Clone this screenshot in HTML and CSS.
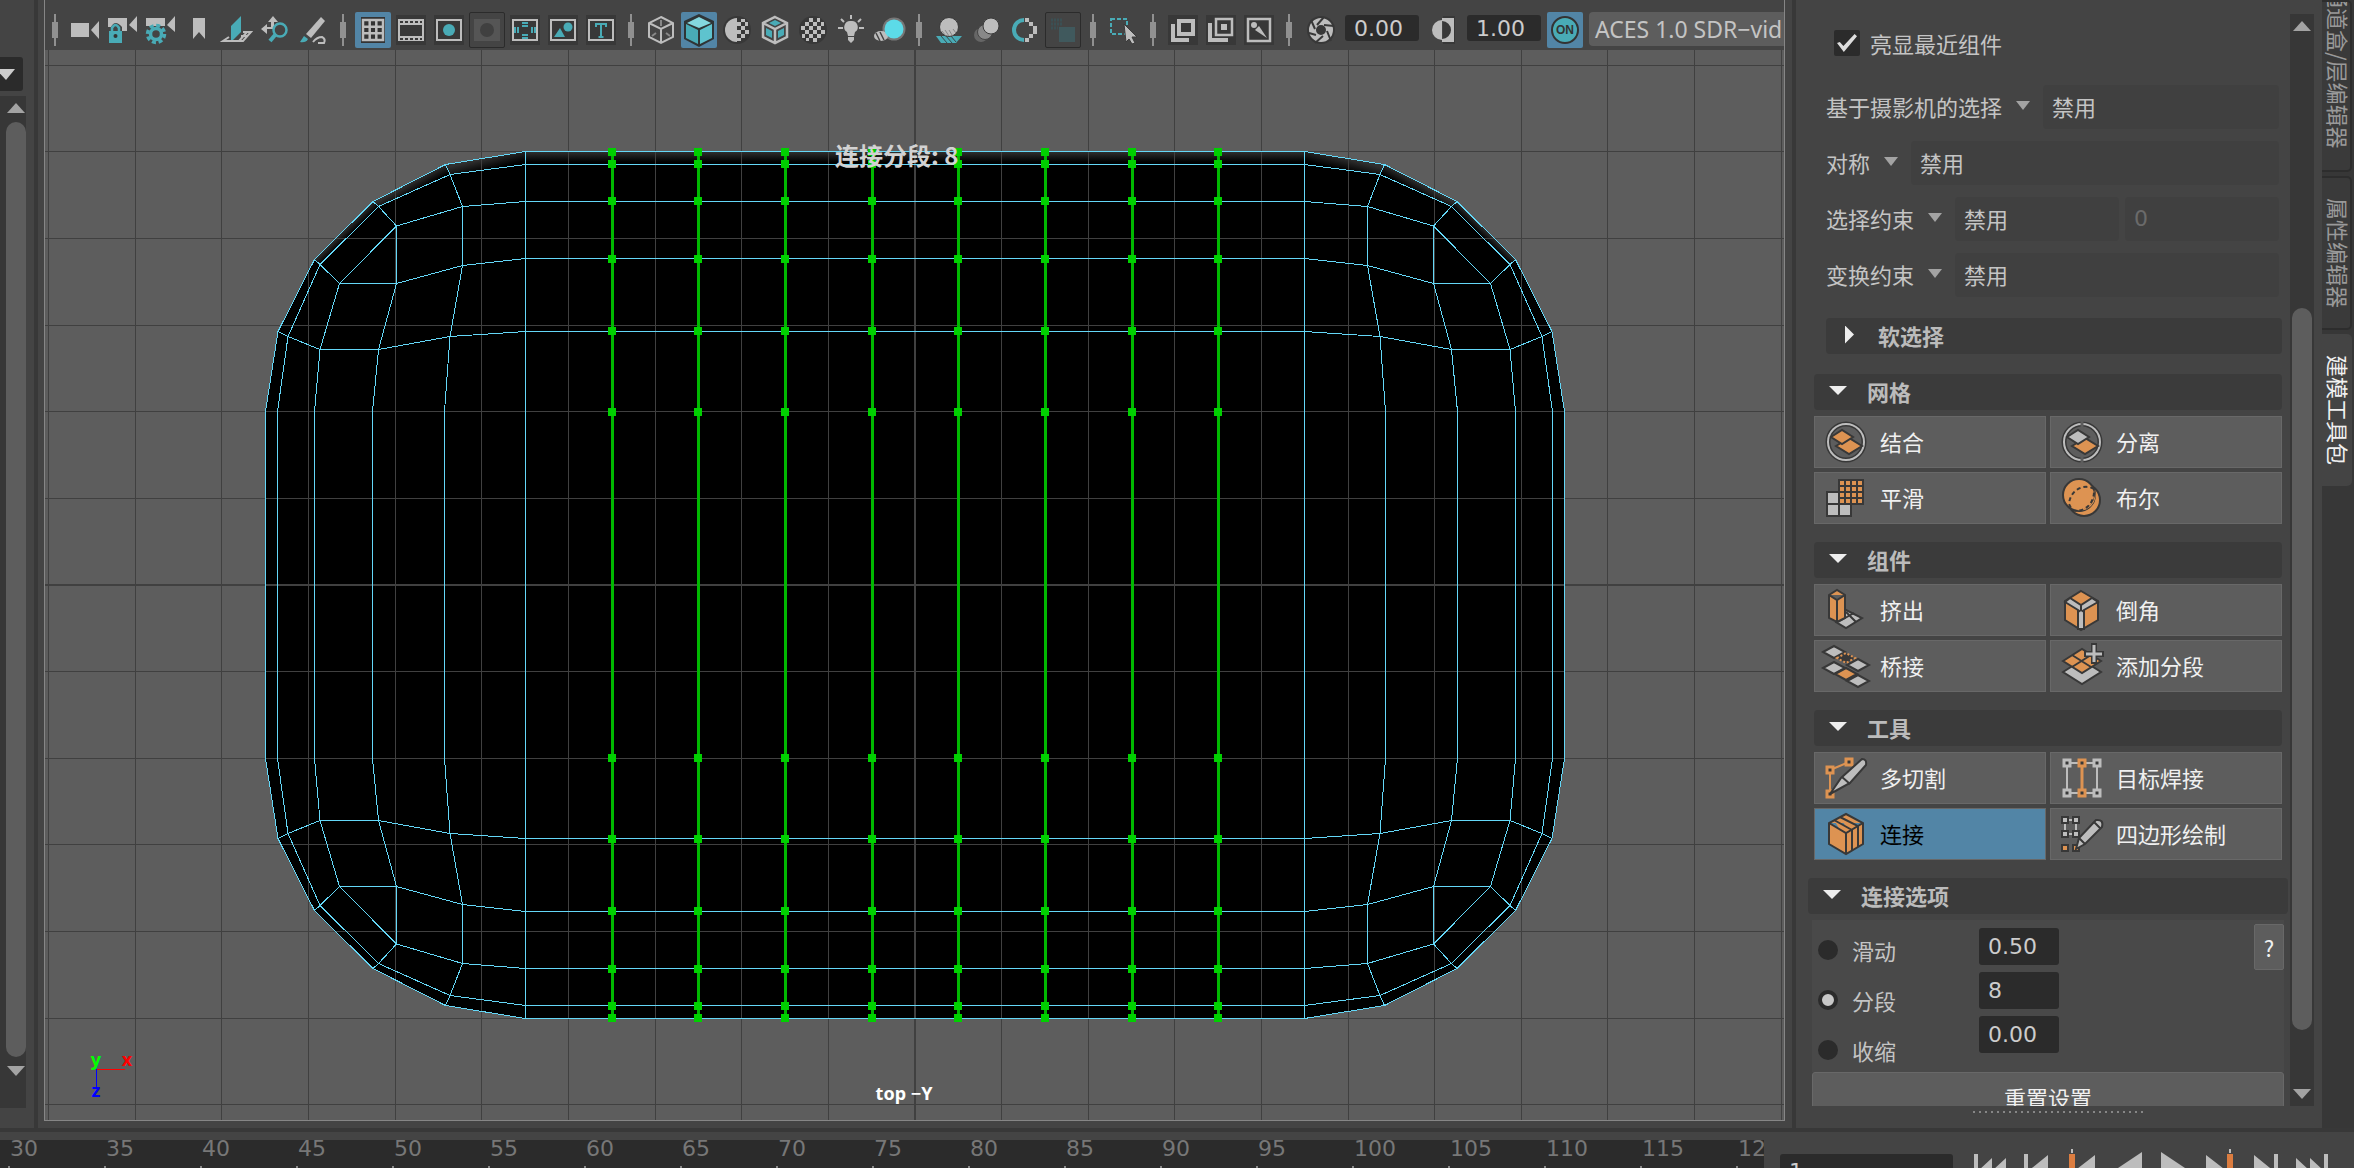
FILE: index.html
```html
<!DOCTYPE html>
<html lang="zh-CN">
<head>
<meta charset="utf-8">
<title>建模工具包</title>
<link rel="stylesheet" href="styles.css">
</head>
<body>
<div class="workspace">
  <aside class="left-strip">
    <button class="left-menu" aria-label="菜单"><svg width="16" height="12" viewBox="0 0 16 12"><path d="M-4 1H15L6 12Z" fill="#ccc"/></svg></button>
    <div class="scroll left-scroll">
      <svg class="arrow" width="18" height="10" viewBox="0 0 18 10"><path d="M0 10L9 0L18 10Z"/></svg>
      <div class="thumb left-thumb"></div>
      <svg class="arrow" width="18" height="10" viewBox="0 0 18 10"><path d="M0 0H18L9 10Z"/></svg>
    </div>
  </aside>

  <main class="view-cell">
    <div class="view-frame">
      <div class="toolbar">
        <svg class="sep" viewBox="0 0 20 36"><use href="#sep"/></svg>
        <button class="tool" aria-label="选择摄影机"><svg viewBox="0 0 36 36"><path class="g" d="M4 11H22V25H4ZM24 18L32 9V27Z"/></svg></button>
        <button class="tool" aria-label="锁定摄影机"><svg viewBox="0 0 36 36"><path class="g" d="M3 6H22V19H17V15Q10 7 6 15H3ZM24 13L32 4V20Z"/><path class="ts" stroke-width="2.500" d="M7 20V16Q10.500 10 14 16V20"/><path class="t" d="M4 19H17V31H4Z"/><circle cx="10.500" cy="24" r="2" fill="#333"/></svg></button>
        <button class="tool" aria-label="摄影机属性"><svg viewBox="0 0 36 36"><path class="g" d="M3 6H22V14H3ZM24 13L32 4V20Z"/><circle cx="13" cy="22" r="8.500" fill="none" stroke="#49abb6" stroke-width="3.500" stroke-dasharray="4 2.670"/><circle cx="13" cy="22" r="5.500" fill="#444" stroke="#49abb6" stroke-width="3.500"/></svg></button>
        <button class="tool" aria-label="书签"><svg viewBox="0 0 36 36"><path class="g" d="M12 6H24V27L18 20L12 27Z"/></svg></button>
        <button class="tool" aria-label="图像平面"><svg viewBox="0 0 36 36"><path class="t" d="M12 14L22 4V20L12 30Z"/><path fill="none" stroke="#bdbdbd" stroke-width="2" d="M10 25L4 29H24L32 20H24M22 24H29M28 20L20 29"/></svg></button>
        <button class="tool" aria-label="平移缩放"><svg viewBox="0 0 36 36"><path class="g" d="M16 4L21 10H17V17H10V22L4 17L10 12V15H14V10H11Z"/><circle class="ts" cx="23" cy="18" r="6.500" stroke-width="2.500"/><path class="ts" stroke-width="4" d="M18 23L13 29"/></svg></button>
        <button class="tool" aria-label="蓝色铅笔"><svg viewBox="0 0 36 36"><path class="g" d="M26 5L30 9L16 26L11 22Z"/><path class="t" d="M9 24L13 27Q11 31 5 30Z"/><path class="gs" stroke-width="2" d="M18 30Q22 25 27 25Q31 27 29 31H23"/></svg></button>
        <svg class="sep" viewBox="0 0 20 36"><use href="#sep"/></svg>
        <button class="tool on" aria-label="栅格"><svg viewBox="0 0 36 36"><path fill="#333" d="M6 5H30V31H6Z"/><path class="gs" stroke-width="2.500" d="M8 8H28V28H8ZM14.700 8V28M21.300 8V28M8 14.700H28M8 21.300H28"/></svg></button>
        <button class="tool" aria-label="胶片门"><svg viewBox="0 0 36 36"><use href="#plate"/><path class="g" d="M5 7H31V29H5Z"/><path fill="#383838" d="M5 13H31V24H5Z"/><path stroke="#383838" stroke-width="2" stroke-dasharray="3 2" d="M7 10H30M7 27H30"/><path class="gs" stroke-width="2" d="M6 7V29M30 7V29"/></svg></button>
        <button class="tool" aria-label="分辨率门"><svg viewBox="0 0 36 36"><use href="#plate"/><path class="gs" stroke-width="2" d="M6 8H30V28H6Z"/><circle class="t" cx="18" cy="18" r="6"/></svg></button>
        <button class="tool off" aria-label="门遮罩" disabled><svg viewBox="0 0 36 36"><path fill="#555" d="M5 7H31V29H5Z"/><circle fill="#404040" cx="18" cy="18" r="7"/></svg></button>
        <button class="tool" aria-label="区域图"><svg viewBox="0 0 36 36"><use href="#plate"/><path class="gs" stroke-width="2" d="M6 8H30V28H6Z"/><path class="ts" stroke-width="2" d="M15 11H21M15 14H21M15 23H21M15 26H21M8 15V21M11 15V21M25 15V21M28 15V21"/></svg></button>
        <button class="tool" aria-label="安全动作"><svg viewBox="0 0 36 36"><use href="#plate"/><path class="gs" stroke-width="2" d="M6 8H30V28H6Z"/><path class="t" d="M9 25L15 16L20 25Z"/><circle class="t" cx="23" cy="15" r="4.500"/></svg></button>
        <button class="tool" aria-label="安全标题"><svg viewBox="0 0 36 36"><use href="#plate"/><path class="gs" stroke-width="2" d="M6 8H30V28H6Z"/><path class="ts" stroke-width="2" d="M13 15V12H23V15M18 12V25M15.500 25H20.500"/></svg></button>
        <svg class="sep" viewBox="0 0 20 36"><use href="#sep"/></svg>
        <button class="tool" aria-label="线框"><svg viewBox="0 0 36 36"><path class="gs" stroke-width="2" d="M18 5L30 11V25L18 31L6 25V11ZM6 11L18 17L30 11M18 17V31"/><path stroke="#888" stroke-width="2" d="M18 8V14M9 24L13 21M27 24L23 21"/></svg></button>
        <button class="tool on" aria-label="着色"><svg viewBox="0 0 36 36"><path fill="#2f3436" d="M18 2L33 9V27L18 35L3 27V9Z"/><path fill="#84d7df" d="M18 5L30 11L18 16L6 11Z"/><path fill="#49abb6" d="M5 12L17 18V32L5 26Z"/><path fill="#5ec3ce" d="M31 12L19 18V32L31 26Z"/></svg></button>
        <button class="tool" aria-label="默认材质"><svg viewBox="0 0 36 36"><circle cx="18" cy="18" r="14" fill="#383838"/><path class="g" d="M18 6A12 12 0 0 0 18 30Z"/><path class="g" d="M18 10h4v4h-4zM18 18h4v4h-4zM18 26h4v3h-4zM22 7h4v3h-4zM22 14h4v4h-4zM22 22h4v4h-4zM26 10h3v4h-3zM26 18h4v4h-4z"/></svg></button>
        <button class="tool" aria-label="着色线框"><svg viewBox="0 0 36 36"><path class="gs" stroke-width="2.500" d="M18 5L30 11V25L18 31L6 25V11ZM6 11L18 17L30 11M18 17V31"/><path class="t" d="M18 8L24 11L18 14L12 11ZM9 16L15 19V26L9 23ZM27 16L21 19V26L27 23Z"/></svg></button>
        <button class="tool" aria-label="纹理"><svg viewBox="0 0 36 36"><circle cx="18" cy="18" r="14" fill="#383838"/><path class="g" d="M14 6h4v4h-4zM22 6h3v4h-3zM10 10h4v4h-4zM18 10h4v4h-4zM26 10h3v4h-3zM6 14h4v4h-4zM14 14h4v4h-4zM22 14h4v4h-4zM10 18h4v4h-4zM18 18h4v4h-4zM26 18h4v4h-4zM7 22h3v4h-3zM14 22h4v4h-4zM22 22h4v4h-4zM11 26h3v3h-3zM18 26h4v4h-4z"/></svg></button>
        <button class="tool" aria-label="灯光"><svg viewBox="0 0 36 36"><path class="g" d="M18 9A6 6 0 0 1 22 20L21 24H15L14 20A6 6 0 0 1 18 9ZM15 25H21V28L18 31L15 28Z"/><path class="gs" stroke-width="2" d="M18 3V7M8 7L11 10M28 7L25 10M5 16H10M26 16H31"/></svg></button>
        <button class="tool" aria-label="阴影"><svg viewBox="0 0 36 36"><circle cx="23" cy="17" r="11.500" fill="#777"/><ellipse cx="10" cy="24" rx="7" ry="5" fill="#bdbdbd"/><path stroke="#444" stroke-width="1.500" d="M5 21L9 29M9 20L13 28"/><circle cx="23" cy="17" r="9.500" fill="#5cdbe8"/></svg></button>
        <svg class="sep" viewBox="0 0 20 36"><use href="#sep"/></svg>
        <button class="tool" aria-label="环境光遮挡"><svg viewBox="0 0 36 36"><path class="t" d="M5 24H31L25 31H10Z"/><path stroke="#3a4a4c" d="M10 24L16 31M15 24L21 31M20 24L25 30"/><circle class="g" cx="18" cy="15" r="9.500" stroke="#3a3a3a"/><path stroke="#888" d="M11 19L14 23M14 18L18 24M18 18L21 23M22 17L25 21"/></svg></button>
        <button class="tool" aria-label="运动模糊"><svg viewBox="0 0 36 36"><circle cx="12" cy="23" r="7" fill="#666"/><circle cx="16" cy="20" r="7.500" fill="#888" stroke="#444"/><circle cx="22" cy="14" r="8" class="g" stroke="#3a3a3a"/></svg></button>
        <button class="tool" aria-label="抗锯齿"><svg viewBox="0 0 36 36"><path class="ts" stroke-width="4" d="M17 8A10 10 0 0 0 17 28"/><path class="g" d="M18 6h4v4h-4zM22 10h4v4h-4zM26 14h4v8h-4zM22 22h4v4h-4zM18 26h4v4h-4z"/></svg></button>
        <button class="tool off" aria-label="景深" disabled><svg viewBox="0 0 36 36"><path fill="#40595d" d="M14 15H30V30H14Z"/><path stroke="#3b5054" stroke-width="3" stroke-dasharray="2 1" d="M6 8H18M6 12H18M6 16H13"/></svg></button>
        <svg class="sep" viewBox="0 0 20 36"><use href="#sep"/></svg>
        <button class="tool" aria-label="隔离选择"><svg viewBox="0 0 36 36"><path class="ts" stroke-width="2" stroke-dasharray="4 2" d="M6 7H22V22H6Z"/><path class="g" d="M19 12L32 25L27 25L30 31L27 32L24 27L21 30Z" stroke="#3a3a3a"/></svg></button>
        <svg class="sep" viewBox="0 0 20 36"><use href="#sep"/></svg>
        <button class="tool" aria-label="X 射线"><svg viewBox="0 0 36 36"><use href="#plate"/><path class="gs" stroke-width="4" d="M14 9H28V22H14ZM10 14H8V28H22V26"/></svg></button>
        <button class="tool" aria-label="X 射线显示活动组件"><svg viewBox="0 0 36 36"><use href="#plate"/><path class="gs" stroke-width="2.500" d="M13 7H29V23H13Z"/><path class="gs" stroke-width="4" d="M9 13H7V28H23V26"/><path class="g" d="M18 12H24V18H18Z"/></svg></button>
        <button class="tool" aria-label="X 射线显示关节"><svg viewBox="0 0 36 36"><use href="#plate"/><path class="gs" stroke-width="2.500" d="M7 7H29V29H7Z"/><circle class="g" cx="13" cy="13" r="3"/><path class="g" d="M14 18L18 14L26 26Z"/></svg></button>
        <svg class="sep" viewBox="0 0 20 36"><use href="#sep"/></svg>
        <div class="exposure">
          <button class="tool" aria-label="曝光"><svg viewBox="0 0 36 36"><circle cx="18" cy="18" r="14" fill="#383838"/><circle class="gs" cx="18" cy="18" r="8.500" stroke-width="7"/><path stroke="#383838" stroke-width="2" d="M14 13L21 5M21 13L31 14M24 19L28 29M20 24L12 31M13 23L6 21M12 17L8 8"/></svg></button>
          <input class="num" type="text" value="0.00" aria-label="曝光值">
          <button class="tool" aria-label="Gamma"><svg viewBox="0 0 36 36"><path fill="#383838" d="M18 4H30V32H18Z"/><path class="g" d="M17 8A10 10 0 0 0 17 28Z"/><path class="g" d="M17 6H29V30H17V27A9 9 0 0 0 17 9Z"/></svg></button>
          <input class="num" type="text" value="1.00" aria-label="Gamma 值">
          <button class="tool on on-badge" aria-label="颜色管理"><svg viewBox="0 0 36 36"><circle cx="18" cy="18" r="13" fill="#49abb6" stroke="#333" stroke-width="2"/><text x="18" y="22" text-anchor="middle">ON</text></svg></button>
          <button class="color-space">ACES 1.0 SDR−vid</button>
        </div>
      </div>

      <svg class="viewport" viewBox="45 50 1739 1070" preserveAspectRatio="xMidYMid slice">
        <defs>
          <g id="sep"><path fill="#909090" d="M9 2H11V34H9ZM7 10H13V26H7Z"/></g>
          <path id="plate" fill="#383838" d="M3 3H33V33H3Z"/>
          <linearGradient id="rimTop" x1="0" y1="0" x2="0" y2="1"><stop offset="0" stop-color="#303030"/><stop offset=".8" stop-color="#000"/></linearGradient>
          <linearGradient id="rimA" gradientUnits="userSpaceOnUse" x1="-430" y1="-427" x2="-427" y2="-415"><stop offset="0" stop-color="#303030"/><stop offset="1" stop-color="#000"/></linearGradient>
          <linearGradient id="rimB" gradientUnits="userSpaceOnUse" x1="-505" y1="-402" x2="-500" y2="-393"><stop offset="0" stop-color="#303030"/><stop offset="1" stop-color="#000"/></linearGradient>
          <linearGradient id="rimC" gradientUnits="userSpaceOnUse" x1="-571" y1="-354" x2="-566" y2="-349"><stop offset="0" stop-color="#2a2a2a"/><stop offset="1" stop-color="#000"/></linearGradient>
          <path id="body" d="M0-433.500H-389.500L-469.500-420.500L-542-383.500L-600.500-325.500L-637-253.500L-649.500-173.500V0H0Z"/>
          <g id="rim">
            <path fill="url(#rimTop)" d="M0-433.500H-389.500V-420.500H0Z"/>
            <path fill="url(#rimA)" d="M-389.500-433.500L-469.500-420.500L-465-410.500L-389.500-420.500Z"/>
            <path fill="url(#rimB)" d="M-469.500-420.500L-542-383.500L-536.500-378.500L-465-410.500Z"/>
            <path fill="url(#rimC)" d="M-542-383.500L-600.500-325.500L-595-320.500L-536.500-378.500Z"/>
          </g>
          <path id="wires" d="M0-433.500H-389.500L-469.500-420.500L-542-383.500L-600.500-325.500L-637-253.500L-649.500-173.500V0
            M0-420.500H-389.500L-465-410.500L-536.500-378.500L-595-320.500L-627-248.500L-637.500-173.500V0
            M0-383.500H-389.500L-452.500-378.500L-518.500-359L-575.500-301.500L-595-235.500L-600.500-173.500V0
            M0-326.500H-389.500L-452.500-319.500L-518.500-301.500H-575.500
            M0-253.500H-389.500L-465-248.500L-536.500-235.500H-595L-627-248.500L-637-253.500
            M-389.500-433.500V0
            M-469.500-420.500L-465-410.500L-452.500-378.500V-319.500L-465-248.500L-470.500-173.500V0
            M-542-383.500L-536.500-378.500L-518.500-359V-301.500L-536.500-235.500L-542.500-173.500V0
            M-600.500-325.500L-595-320.500L-575.500-301.500"/>
          <g id="cut">
            <path fill="#00b800" d="M-1-433H2V433H-1Z"/>
            <path fill="#00d000" d="M-4-437h8v8h-8zM-4-425h8v8h-8zM-4-388h8v8h-8zM-4-330h8v8h-8zM-4-258h8v8h-8zM-4-177h8v8h-8zM-4 169h8v8h-8zM-4 250h8v8h-8zM-4 322h8v8h-8zM-4 380h8v8h-8zM-4 417h8v8h-8zM-4 429h8v8h-8z"/>
          </g>
        </defs>
        <g transform="translate(915 585)">
          <use href="#body"/><use href="#body" transform="scale(-1 1)"/><use href="#body" transform="scale(1 -1)"/><use href="#body" transform="scale(-1 -1)"/>
          <use href="#rim"/><use href="#rim" transform="scale(-1 1)"/>
        </g>
        <path class="grid" d="M48.500 50V1120M135.500 50V1120M221.500 50V1120M308.500 50V1120M395.500 50V1120M481.500 50V1120M568.500 50V1120M655.500 50V1120M741.500 50V1120M828.500 50V1120M1001.500 50V1120M1088.500 50V1120M1174.500 50V1120M1261.500 50V1120M1348.500 50V1120M1434.500 50V1120M1521.500 50V1120M1607.500 50V1120M1694.500 50V1120M1781.500 50V1120M45 65.500H1784M45 151.500H1784M45 238.500H1784M45 325.500H1784M45 411.500H1784M45 498.500H1784M45 671.500H1784M45 758.500H1784M45 844.500H1784M45 931.500H1784M45 1018.500H1784M45 1104.500H1784"/>
        <path class="grid axis" d="M915 50V1120M45 585H1784"/>
        <g transform="translate(915 585)">
          <g class="wires"><use href="#wires"/><use href="#wires" transform="scale(-1 1)"/><use href="#wires" transform="scale(1 -1)"/><use href="#wires" transform="scale(-1 -1)"/></g>
          <use href="#cut" x="-303"/><use href="#cut" x="-217"/><use href="#cut" x="-130"/><use href="#cut" x="-43"/><use href="#cut" x="43"/><use href="#cut" x="130"/><use href="#cut" x="217"/><use href="#cut" x="303"/>
        </g>
        <text class="hud" x="835" y="165">连接分段: 8</text>
        <text class="cam" x="904" y="1100" text-anchor="middle">top −Y</text>
        <path fill="none" stroke="#f00" d="M96 1069.500H125"/>
        <path fill="none" stroke="#00f" d="M96.500 1069V1088"/>
        <g class="cam" text-anchor="middle"><text x="96" y="1066" fill="#0f0">y</text><text x="127" y="1066" fill="#f00">x</text><text x="96" y="1097" fill="#00f">z</text></g>
      </svg>
    </div>
  </main>

  <section class="kit">
    <div class="kit-body">
      <div class="kit-content">
        <label class="check"><input type="checkbox" checked>亮显最近组件</label>
        <div class="rows">
          <div class="row"><button class="drop" id="d1">基于摄影机的选择</button><input class="val" type="text" value="禁用" readonly aria-labelledby="d1"></div>
          <div class="row"><button class="drop" id="d2">对称</button><input class="val" type="text" value="禁用" readonly aria-labelledby="d2"></div>
          <div class="row"><button class="drop" id="d3">选择约束</button><input class="val" type="text" value="禁用" readonly aria-labelledby="d3"><input class="val amount" type="text" value="0" disabled aria-label="约束值"></div>
          <div class="row"><button class="drop" id="d4">变换约束</button><input class="val" type="text" value="禁用" readonly aria-labelledby="d4"></div>
        </div>
        <button class="bar closed">软选择</button>

        <button class="bar">网格</button>
        <div class="cmds">
          <button><svg viewBox="0 0 44 44"><circle cx="22" cy="22" r="18" fill="none" stroke="#383838" stroke-width="5"/><circle class="gs" cx="22" cy="22" r="18" stroke-width="2"/><path class="o" d="M12 26L25 18L38 26L25 34Z"/><path class="o" d="M7 17L18 10L29 17L18 24Z"/></svg>结合</button>
          <button><svg viewBox="0 0 44 44"><circle cx="22" cy="22" r="18" fill="none" stroke="#383838" stroke-width="5"/><circle class="gs" cx="22" cy="22" r="18" stroke-width="2"/><path stroke="#5d5d5d" stroke-width="3" d="M22 1V10M22 34V43"/><path class="o" d="M12 26L25 18L38 26L25 34Z"/><path class="p" d="M7 17L18 10L29 17L18 24Z"/></svg>分离</button>
          <button><svg viewBox="0 0 44 44"><path class="p" d="M3 16H15V28H3ZM3 28H15V40H3ZM15 28H27V40H15Z"/><path fill="#383838" d="M14 3H40V29H14Z"/><path fill="none" stroke="#dd9352" stroke-width="4" stroke-dasharray="4 2" d="M16 7H39M16 13H39M16 19H39M16 25H39"/></svg>平滑</button>
          <button><svg viewBox="0 0 44 44"><circle class="o" cx="24" cy="24" r="16"/><circle class="o" cx="19" cy="19" r="16"/><path fill="#dd9352" d="M34 13A15 15 0 0 1 14 33A16 16 0 0 0 34 13Z"/><path fill="none" stroke="#383838" stroke-width="2" stroke-dasharray="4 3" d="M34 13C24 7 10 14 9 28L12 34C22 37 35 30 34 13"/></svg>布尔</button>
        </div>

        <button class="bar">组件</button>
        <div class="cmds">
          <button><svg viewBox="0 0 44 44"><path class="p" d="M18 20L38 30L22 40L12 34Z"/><path class="k" d="M14 34L30 25M22 24L32 34"/><path class="o" d="M5 7L13 2L21 7V30L13 34L5 30ZM5 7L13 12L21 7M13 12V34"/></svg>挤出</button>
          <button><svg viewBox="0 0 44 44"><path class="o" d="M21 3L38 13V32L21 42L5 32V13Z"/><path class="p" d="M5 14L10 10L21 17L32 10L38 14L24 22V41H18V22Z"/><path class="k" d="M21 17V22L18 24M21 22L24 24"/></svg>倒角</button>
          <button><svg viewBox="0 0 44 44"><path class="p" d="M-1 8L10 2L21 8L10 14ZM-1 24L10 18L21 24L10 30ZM23 21L34 15L45 21L34 27ZM23 37L34 31L45 37L34 43Z"/><path class="o" d="M11 30L22 24L33 30L22 36Z"/><path fill="#383838" stroke="#dd9352" stroke-width="2" stroke-dasharray="2 2" d="M13 14L22 9L31 14L22 19Z"/></svg>桥接</button>
          <button><svg viewBox="0 0 44 44"><path class="p" d="M3 28L22 16L41 28L22 40Z"/><path class="o" d="M3 17L22 5L41 17L22 29ZM12 11L31 23M31 11L12 23"/><path fill="none" stroke="#383838" stroke-width="6" d="M34 -1V20M24 10H44"/><path class="gs" stroke-width="3" d="M34 1V18M26 10H42"/></svg>添加分段</button>
        </div>

        <button class="bar">工具</button>
        <div class="cmds">
          <button><svg viewBox="0 0 44 44"><path fill="none" stroke="#dd9352" stroke-width="2" d="M6 14V38M6 14L25 6"/><path class="n" d="M3 11H9V17H3ZM22 3H28V9H22ZM3 35H9V41H3Z"/><path class="p" d="M6 38L17 22L38 3Q43 3 42 9L26 27Z"/><path class="k" d="M18 21L26 28"/></svg>多切割</button>
          <button><svg viewBox="0 0 44 44"><path class="gs" stroke-width="2" d="M7 7H37V37H7Z"/><path stroke="#dd9352" stroke-width="3" d="M22 7V37"/><path class="m" d="M4 4H10V10H4ZM34 4H40V10H34ZM4 34H10V40H4ZM34 34H40V40H34Z"/><path class="n" d="M19 4H25V10H19ZM19 34H25V40H19Z"/></svg>目标焊接</button>
          <button class="active"><svg viewBox="0 0 44 44"><path class="o" d="M22 2L39 11V32L22 42L5 32V11ZM5 11L22 21L39 11M22 21V42M10 8L28 18V38M16 5L34 14V35"/></svg>连接</button>
          <button><svg viewBox="0 0 44 44"><path class="gs" stroke-width="2" d="M5 8H16V22H5Z"/><path class="p" d="M2 5H8V11H2ZM13 5H19V11H13ZM2 19H8V25H2ZM13 19H19V25H13Z"/><path class="o" d="M2 33H8V39H2ZM13 33H19V39H13Z"/><path class="p" d="M16 37L19 26L36 8Q44 7 42 15L25 32ZM19 26L25 32M34 10L41 17"/></svg>四边形绘制</button>
        </div>

        <div class="options">
          <button class="bar">连接选项</button>
          <div class="form">
            <div class="modes">
              <label><input type="radio" name="mode">滑动</label>
              <label><input type="radio" name="mode" checked>分段</label>
              <label><input type="radio" name="mode">收缩</label>
            </div>
            <div class="nums">
              <input class="num" type="text" value="0.50" aria-label="滑动">
              <input class="num" type="text" value="8" aria-label="分段">
              <input class="num" type="text" value="0.00" aria-label="收缩">
            </div>
            <button class="help">?</button>
          </div>
          <button class="reset">重置设置</button>
        </div>
      </div>
      <div class="scroll kit-scroll">
        <svg class="arrow" width="18" height="10" viewBox="0 0 18 10"><path d="M0 10L9 0L18 10Z"/></svg>
        <div class="thumb kit-thumb"></div>
        <svg class="arrow" width="18" height="10" viewBox="0 0 18 10"><path d="M0 0H18L9 10Z"/></svg>
      </div>
    </div>
    <div class="grip"></div>
  </section>

  <nav class="tabs">
    <button class="tab first">通道盒/层编辑器</button>
    <button class="tab">属性编辑器</button>
    <button class="tab current">建模工具包</button>
  </nav>
</div>

<footer class="transport">
  <div class="timeline">
    <span>30</span><span>35</span><span>40</span><span>45</span><span>50</span><span>55</span><span>60</span><span>65</span><span>70</span><span>75</span><span>80</span><span>85</span><span>90</span><span>95</span><span>100</span><span>105</span><span>110</span><span>115</span><span>120</span>
  </div>
  <input class="num frame" type="text" value="1" aria-label="当前帧">
  <div class="playback">
    <button aria-label="转到开头"><svg viewBox="0 0 46 36"><path class="g" d="M7 22H11V36H7ZM12 38L25 26V38ZM26 38L39 26V38Z"/></svg></button>
    <button aria-label="后退一帧"><svg viewBox="0 0 46 36"><path class="g" d="M11 22H15V36H11ZM14 40L35 23V40Z"/></svg></button>
    <button aria-label="后退到关键帧"><svg viewBox="0 0 46 36"><path fill="#dc7d40" d="M10 22H16V36H10Z"/><path class="g" d="M12 17H14V21H12ZM14 40L36 23V40Z"/></svg></button>
    <button aria-label="反向播放"><svg viewBox="0 0 46 36"><path class="g" d="M10 38L37 20V38Z"/></svg></button>
    <button aria-label="播放"><svg viewBox="0 0 46 36"><path class="g" d="M10 20L37 38H10Z"/></svg></button>
    <button aria-label="前进到关键帧"><svg viewBox="0 0 46 36"><path fill="#dc7d40" d="M30 22H36V36H30Z"/><path class="g" d="M32 17H34V21H32ZM9 23L31 40H9Z"/></svg></button>
    <button aria-label="前进一帧"><svg viewBox="0 0 46 36"><path class="g" d="M31 22H35V36H31ZM11 23L32 40H11Z"/></svg></button>
    <button aria-label="转到结尾"><svg viewBox="0 0 46 36"><path class="g" d="M35 22H39V36H35ZM7 26L20 38H7ZM21 26L34 38H21Z"/></svg></button>
  </div>
</footer>
</body>
</html>
```
FILE: styles.css
```css
* { box-sizing: border-box; }

body {
  margin: 0;
  height: 100vh;
  overflow: hidden;
  display: flex;
  flex-direction: column;
  background: #444;
  color: #c4c4c4;
  font: 22px/26px "DejaVu Sans", "Noto Sans CJK SC", sans-serif;
}

button, input {
  font: inherit;
  color: inherit;
  border: 0;
  padding: 0;
  margin: 0;
  background: none;
  min-width: 0;
}

button { font-family: "Noto Sans CJK SC", sans-serif; }

svg { display: block; }

.g { fill: #bdbdbd; }
.t { fill: #49abb6; }
.gs { fill: none; stroke: #bdbdbd; }
.ts { fill: none; stroke: #49abb6; }
.o { fill: #dd9352; stroke: #383838; stroke-width: 2; }
.p { fill: #bdbdbd; stroke: #383838; stroke-width: 2; }
.k { fill: none; stroke: #383838; stroke-width: 2; }
.n { fill: #383838; stroke: #dd9352; stroke-width: 3; }
.m { fill: #383838; stroke: #bdbdbd; stroke-width: 3; }

.workspace {
  flex: 1;
  min-height: 0;
  display: flex;
  border-bottom: 4px solid #383838;
}

/* left strip */
.left-strip {
  width: 38px;
  border-right: 4px solid #383838;
  padding: 57px 8px 20px 0;
  display: flex;
  flex-direction: column;
  gap: 5px;
}
.left-menu {
  width: 23px;
  height: 34px;
  background: #2b2b2b;
  border-radius: 0 3px 3px 0;
}

.scroll {
  background: #373737;
  display: flex;
  flex-direction: column;
  align-items: center;
  padding: 7px 2px;
}
.scroll .arrow { fill: #a3a3a3; flex: none; }
.thumb { width: 20px; background: #5d5d5d; border-radius: 10px; flex: 1; }
.left-scroll { flex: 1; width: 26px; padding: 7px 0 32px 6px; }
.left-thumb { margin: 9px 0; }

/* viewport */
.view-cell { flex: 1; min-width: 0; padding: 0 7px 7px 6px; display: flex; }
.view-frame {
  flex: 1;
  min-width: 0;
  border: solid #868686;
  border-width: 0 1px 1px;
  display: flex;
  flex-direction: column;
}
.toolbar {
  height: 50px;
  padding: 12px 0 2px 0;
  display: flex;
  gap: 2px;
  overflow: hidden;
  flex: none;
}
.sep { width: 20px; height: 36px; flex: none; }
.tool { width: 36px; height: 36px; flex: none; border-radius: 2px; }
.tool svg { width: 36px; height: 36px; }
.tool.on { background: #5285a6; }
.tool.off { outline: 1px solid #2b2b2b; outline-offset: -1px; }
.on-badge text { font: 700 12px "Liberation Sans", sans-serif; fill: #333; }
.exposure { display: flex; gap: 6px; margin-left: 2px; flex: 1; min-width: 0; }
.num {
  background: #2b2b2b;
  border-radius: 3px;
  padding-left: 9px;
  color: #ccc;
  width: 74px;
  font-family: "DejaVu Sans", sans-serif;
}
.exposure .num { height: 26px; margin-top: 3px; padding-top: 2px; flex: none; }
.color-space {
  flex: 1;
  height: 34px;
  background: #5d5d5d;
  border-radius: 4px 0 0 4px;
  padding-left: 6px;
  text-align: left;
  white-space: nowrap;
  overflow: hidden;
  font-family: "Noto Sans", sans-serif;
  font-size: 23px;
}

.viewport { flex: 1; min-height: 0; width: 100%; background: #5d5d5d; }
.grid { fill: none; stroke: #404040; stroke-width: 1; shape-rendering: crispEdges; }
.grid.axis { stroke-width: 2; }
.wires { fill: none; stroke: #64d7f7; stroke-width: 1; shape-rendering: crispEdges; }
.hud { font: 700 24px "Noto Sans CJK SC", sans-serif; fill: #d2d2d2; }
.cam { font: 700 18px "Noto Sans", sans-serif; }
text.cam { fill: #fff; }

/* modelling toolkit */
.kit {
  width: 530px;
  flex: none;
  border-left: 4px solid #383838;
  display: flex;
  flex-direction: column;
}
.kit-body { flex: 1; min-height: 0; display: flex; padding-right: 8px; }
.kit-content {
  flex: 1;
  overflow: hidden;
  padding: 30px 8px 0 18px;
  font-family: "Noto Sans CJK SC", sans-serif;
}
.kit-scroll { width: 24px; margin-top: 14px; }
.kit-thumb { flex: none; height: 67%; margin: auto 0 59px; }
.grip {
  height: 22px;
  padding-left: 177px;
  flex: none;
}
.grip::before {
  content: "";
  display: block;
  width: 172px;
  height: 2px;
  margin-top: 5px;
  background: repeating-linear-gradient(90deg, #868686 0 2px, transparent 2px 6px);
}

.check { display: flex; align-items: center; gap: 10px; margin: 0 0 29px 20px; height: 26px; }
.check input {
  appearance: none;
  width: 26px;
  height: 26px;
  background: #2b2b2b;
  border-radius: 2px;
  display: grid;
  place-items: center;
}
.check input:checked::before {
  content: "";
  width: 20px;
  height: 18px;
  background: #ddd;
  clip-path: polygon(0 50%, 14% 45%, 32% 66%, 88% 0, 100% 12%, 34% 100%);
}

.rows { display: flex; flex-direction: column; gap: 12px; padding: 0 3px 0 12px; }
.row { display: flex; height: 44px; }
.drop { display: flex; align-items: center; gap: 14px; padding: 0 13px 3px 0; flex: none; }
.drop::after {
  content: "";
  width: 14px;
  height: 9px;
  background: #a3a3a3;
  clip-path: polygon(0 0, 100% 0, 50% 100%);
}
.val { flex: 1; background: #404040; border-radius: 4px; padding: 0 0 3px 9px; color: #c4c4c4; }
.val.amount { flex: none; width: 154px; margin-left: 6px; padding-bottom: 0; color: #6a6a6a; font-family: "DejaVu Sans", sans-serif; }

.bar {
  display: flex;
  align-items: center;
  width: 100%;
  height: 36px;
  margin: 18px 0 6px;
  padding: 0 0 3px 15px;
  gap: 20px;
  background: #3b3b3b;
  border-radius: 4px;
  font-weight: 700;
  color: #bbb;
}
.bar::before {
  content: "";
  width: 18px;
  height: 9px;
  background: #eee;
  clip-path: polygon(0 0, 100% 0, 50% 100%);
}
.bar.closed { width: auto; margin: 21px 0 20px 12px; min-width: calc(100% - 12px); padding-left: 19px; gap: 24px; }
.bar.closed::before { width: 9px; height: 18px; clip-path: polygon(0 0, 100% 50%, 0 100%); }

.cmds { display: grid; grid-template-columns: 1fr 1fr; gap: 4px; }
.cmds button {
  height: 52px;
  display: flex;
  align-items: center;
  gap: 12px;
  padding: 0 0 3px 9px;
  background: #5d5d5d;
  border: 1px solid #686868;
  color: #f0f0f0;
}
.cmds svg { width: 44px; height: 44px; margin-top: 3px; overflow: visible; flex: none; }
.cmds .active { background: #5285a6; color: #000; }

.options { margin: 0 -6px; }
.form { display: flex; height: 152px; margin: 0 4px; background: #494949; }
.modes { width: 167px; padding-top: 5px; }
.modes label { display: flex; align-items: center; height: 50px; padding-left: 6px; gap: 14px; }
.modes input {
  appearance: none;
  width: 20px;
  height: 20px;
  border-radius: 50%;
  background: #2b2b2b;
}
.modes input:checked { background: #c8c8c8; border: 4px solid #2b2b2b; }
.nums { display: flex; flex-direction: column; gap: 7px; padding-top: 8px; }
.nums .num { width: 80px; height: 37px; }
.help {
  width: 30px;
  height: 46px;
  margin: 4px 0 0 auto;
  background: #5d5d5d;
  border: 1px solid #686868;
  border-radius: 2px;
  color: #f0f0f0;
}
.reset {
  display: block;
  width: calc(100% - 8px);
  height: 52px;
  margin: 0 4px;
  padding-bottom: 3px;
  background: #5d5d5d;
  border: 1px solid #686868;
  border-radius: 3px;
  color: #f0f0f0;
}

/* side tabs */
.tabs { width: 32px; flex: none; background: #373737; display: flex; flex-direction: column; gap: 4px; padding-right: 2px; }
.tab {
  writing-mode: vertical-rl;
  text-orientation: sideways;
  height: 154px;
  width: 30px;
  line-height: 22px;
  flex: none;
  padding-left: 6px;
  background: #3a3a3a;
  border: solid #2d2d2d;
  border-width: 2px 2px 2px 0;
  border-radius: 0 5px 5px 0;
  color: #999;
  white-space: nowrap;
  display: flex;
  align-items: center;
  justify-content: center;
}
.tab.first { height: 172px; justify-content: flex-end; padding-bottom: 21px; overflow: hidden; }
.tab.current { background: #444; border-color: #444; color: #f0f0f0; height: 152px; }

/* timeline */
.transport { height: 36px; flex: none; display: flex; overflow: hidden; padding-right: 19px; }
.timeline {
  flex: 1;
  min-width: 0;
  margin: 8px 16px 0 0;
  padding-left: 8px;
  background: #2b2b2b;
  color: #777;
  display: flex;
  overflow: hidden;
}
.timeline span {
  width: 96px;
  flex: none;
  padding-left: 2px;
  line-height: 18px;
  background: linear-gradient(#888, #888) 0 100% / 2px 2px no-repeat;
}
.frame { width: 173px; height: 34px; margin-top: 22px; flex: none; }
.playback { display: flex; margin-left: 14px; }
.playback button, .playback svg { width: 46px; height: 36px; }
```
